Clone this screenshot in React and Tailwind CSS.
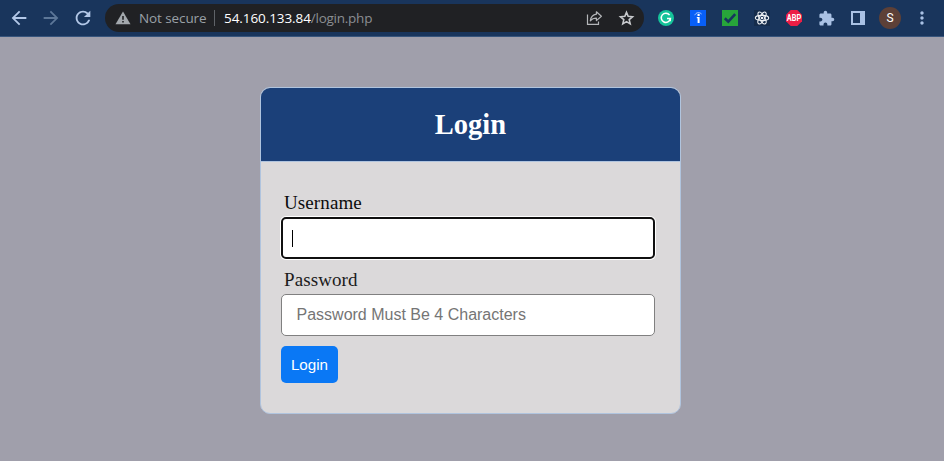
import React from "react";
import {
  MdArrowBack,
  MdArrowForward,
  MdRefresh,
  MdExtension,
  MdMoreVert,
} from "react-icons/md";

function WarningIcon() {
  return (
    <svg width="16" height="14" viewBox="0 0 16 14" className="shrink-0">
      <path d="M8 0.5L15.5 13.3H0.5Z" fill="#a3a8ad" />
      <path d="M7.2 5H8.8V8.8H7.2ZM7.2 10H8.8V11.6H7.2Z" fill="#202124" />
    </svg>
  );
}

function ShareIcon() {
  return (
    <svg width="17" height="16" viewBox="0 0 17 16" fill="none" stroke="#b4b6b9" strokeWidth="1.2">
      <path d="M1.5 4.5V14.3H12.5V11.5" />
      <path d="M10.4 1.8L15.4 6.2L10.4 10.6V8.2C7.6 8.2 5.8 9 4.3 10.9C4.8 7.2 6.8 4.7 10.4 4.2Z" strokeLinejoin="round" />
    </svg>
  );
}

function StarIcon() {
  return (
    <svg width="19" height="19" viewBox="0 0 24 24" fill="none" stroke="#c8cacd" strokeWidth="2" className="mr-[8px] shrink-0">
      <path d="M12 4.2L14.1 9.3L19.6 9.8L15.4 13.4L16.7 18.8L12 15.9L7.3 18.8L8.6 13.4L4.4 9.8L9.9 9.3Z" />
    </svg>
  );
}

function GrammarlyIcon() {
  return (
    <svg width="16" height="16" viewBox="0 0 16 16" fill="none">
      <circle cx="8" cy="8" r="8" fill="#15c39a" />
      <path d="M11.6 5.1A4.6 4.6 0 1 0 12.4 8.6H9" stroke="#fff" strokeWidth="1.5" />
      <path d="M12.3 8.4V11.3" stroke="#fff" strokeWidth="1.3" />
    </svg>
  );
}

function InfoExtIcon() {
  return (
    <svg width="16" height="16" viewBox="0 0 16 16" fill="none">
      <rect width="16" height="16" fill="#085ff7" />
      <path d="M4.8 5.2C6 2.3 9.2 1.8 11.6 4" stroke="#fff" strokeWidth="0.8" opacity="0.8" />
      <circle cx="8.6" cy="4.9" r="1.2" fill="#fff" />
      <path d="M6.8 7H9.6V13H7.6V8.2H6.8Z" fill="#fff" />
    </svg>
  );
}

function CheckExtIcon() {
  return (
    <svg width="16" height="16" viewBox="0 0 16 16" fill="none">
      <rect width="16" height="16" fill="#27a53a" />
      <path d="M2.8 8.2L6.3 11.6L13.2 4.1" stroke="#17355d" strokeWidth="2.6" />
    </svg>
  );
}

function ReactExtIcon() {
  return (
    <svg width="16" height="16" viewBox="0 0 16 16" fill="none" stroke="#eef1f4" strokeWidth="1.1">
      <rect width="16" height="16" fill="#152c4b" stroke="none" />
      <ellipse cx="8" cy="8" rx="6.7" ry="2.6" />
      <ellipse cx="8" cy="8" rx="6.7" ry="2.6" transform="rotate(60 8 8)" />
      <ellipse cx="8" cy="8" rx="6.7" ry="2.6" transform="rotate(120 8 8)" />
      <circle cx="8" cy="8" r="1.3" fill="#eef1f4" stroke="none" />
    </svg>
  );
}

function AbpIcon() {
  return (
    <svg width="16" height="16" viewBox="0 0 16 16">
      <path d="M4.7 0H11.3L16 4.7V11.3L11.3 16H4.7L0 11.3V4.7Z" fill="#ed1e45" />
      <text x="8" y="11" textAnchor="middle" textLength="14.4" lengthAdjust="spacingAndGlyphs" fontSize="8.5" fontWeight="700" fill="#fff" fontFamily="Roboto, sans-serif">
        ABP
      </text>
    </svg>
  );
}

function SidePanelIcon() {
  return (
    <svg width="14" height="14" viewBox="0 0 14 14">
      <path d="M0 0H14V14H0ZM2 2V12H9V2Z" fill="#a9c1e4" fillRule="evenodd" />
    </svg>
  );
}

function Cell({ children }) {
  return <span className="flex h-8 w-8 shrink-0 items-center justify-center">{children}</span>;
}

function Toolbar() {
  return (
    <header className="flex h-[37px] items-center border-b border-[#37557d] bg-[#19355c] pl-[3px]">
      <Cell><MdArrowBack size={22} color="#b3c8e8" /></Cell>
      <Cell><MdArrowForward size={22} color="#5d7798" /></Cell>
      <Cell><MdRefresh size={22} color="#b3c8e8" /></Cell>
      <div className="ml-[6px] flex h-7 w-[539px] shrink-0 items-center rounded-full bg-[#202124] pl-[10px] font-['Open_Sans','Noto_Sans',sans-serif] text-[13.5px] leading-7 whitespace-nowrap">
        <WarningIcon />
        <span className="ml-2 w-[75px] tracking-[-0.1px] text-[#9aa0a6]">Not secure</span>
        <span className="h-4 w-px bg-[#5f6368]" />
        <span className="ml-[9px] flex-1 tracking-[-0.08px] text-white">
          54.160.133.84<span className="tracking-[-0.25px] text-[#8b8e92]">/login.php</span>
        </span>
        <span className="mr-[14px]"><ShareIcon /></span>
        <StarIcon />
      </div>
      <div className="ml-[6px] flex items-center">
        <Cell><GrammarlyIcon /></Cell>
        <Cell><InfoExtIcon /></Cell>
        <Cell><CheckExtIcon /></Cell>
        <Cell><ReactExtIcon /></Cell>
        <Cell><AbpIcon /></Cell>
        <Cell><MdExtension size={17} color="#a9c1e4" /></Cell>
        <Cell><SidePanelIcon /></Cell>
        <Cell>
          <span className="flex h-[22px] w-[22px] items-center justify-center rounded-full bg-[#5d4037] font-[Roboto,sans-serif] text-[12px] text-white">S</span>
        </Cell>
        <Cell><MdMoreVert size={20} color="#a9c1e4" /></Cell>
      </div>
    </header>
  );
}

export default function App() {
  return (
    <div className="flex h-[461px] w-[944px] flex-col overflow-hidden bg-[#a09fab]">
      <Toolbar />
      <main className="mt-[50px] ml-[260px] h-[327px] w-[421px] overflow-hidden rounded-[10px] border border-[#b0c4de] bg-[#dbd9da] font-['Liberation_Serif',serif]">
        <div className="flex h-[74px] items-center justify-center border-b border-[#b0c4de] bg-[#1b4079]">
          <h1 className="pt-[2px] text-[28.5px] font-bold text-white">Login</h1>
        </div>
        <form className="flex flex-col items-start pt-[29px] pl-5">
          <label className="ml-[3px] h-[26px] text-[19px] leading-6 tracking-[0.1px] text-[#0c0c0c]">Username</label>
          <div className="flex h-[42px] w-[374px] items-center rounded-[5px] border-2 border-[#101010] bg-white pl-[9px] shadow-[0_0_0_1px_white]">
            <span className="h-[17px] w-px bg-black" />
          </div>
          <label className="mt-[9px] ml-[3px] h-[26px] text-[19px] leading-6 tracking-[0.1px] text-[#1c1c1c]">Password</label>
          <input
            type="password"
            placeholder="Password Must Be 4 Characters"
            className="h-[42px] w-[374px] rounded-[5px] border border-[#808080] bg-white px-[14.5px] font-['Liberation_Sans',sans-serif] text-[16px] placeholder:text-[#757575]"
          />
          <button type="button" className="mt-[10px] h-[37px] w-[57px] rounded-[5px] bg-[#0a78f5] pt-[2px] font-['Liberation_Sans',sans-serif] text-[15.2px] text-white">
            Login
          </button>
        </form>
      </main>
    </div>
  );
}
